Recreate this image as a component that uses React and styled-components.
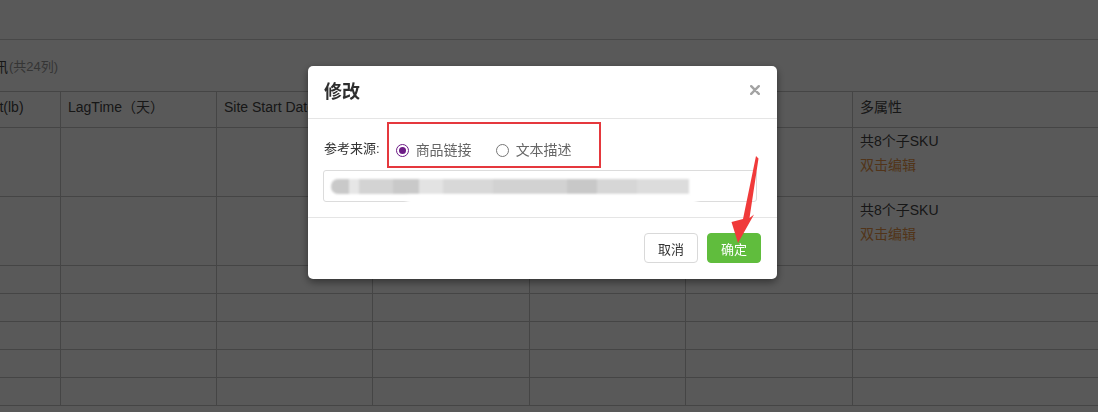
import React from "react";
import styled, { createGlobalStyle } from "styled-components";

const GlobalStyle = createGlobalStyle`
  html, body { margin: 0; padding: 0; width: 100%; height: 100%; overflow: hidden; background: #fff; }
  body { font-family: "Liberation Sans", "Noto Sans CJK SC", sans-serif; color: #444; }
  * { box-sizing: border-box; }
`;

const Page = styled.div`
  width: 1098px;
  height: 412px;
  overflow: hidden;
  background: #fff;
`;

const TopBar = styled.div`
  height: 40px;
  border-bottom: 1px solid #cfcfcf;
`;

const Caption = styled.div`
  height: 51px;
  display: flex;
  align-items: center;
  margin-left: -48px;
  font-size: 14px;
  color: #444;
  white-space: nowrap;
`;

const CaptionCount = styled.span`
  font-size: 13px;
  color: #999;
  margin-left: 1px;
`;

const Grid = styled.div`
  border-top: 1px solid #c6c6c6;
  margin-left: -47px;
  width: 1400px;
`;

const Row = styled.div`
  display: flex;
  height: ${(p) => p.$h}px;
  border-bottom: 1px solid #c6c6c6;
`;

const Cell = styled.div`
  flex: none;
  width: ${(p) => p.$w}px;
  border-right: 1px solid #c6c6c6;
  padding: ${(p) => (p.$head ? "5px 7px" : "1px 7px")};
  font-size: 14px;
  line-height: ${(p) => (p.$head ? 20 : 24)}px;
  color: #444;
  white-space: nowrap;
  overflow: hidden;
`;

const EditLink = styled.div`
  color: #e8964a;
`;

const Overlay = styled.div`
  position: fixed;
  inset: 0;
  background: rgba(0, 0, 0, 0.65);
`;

const Modal = styled.div`
  position: fixed;
  left: 308px;
  top: 66px;
  width: 469px;
  background: #fff;
  border-radius: 5px;
  box-shadow: 0 3px 9px rgba(0, 0, 0, 0.45);
  font-family: "Liberation Sans", "Noto Sans CJK SC", sans-serif;
`;

const ModalHeader = styled.div`
  height: 53px;
  display: flex;
  align-items: center;
  justify-content: space-between;
  padding: 0 17px 0 16px;
  border-bottom: 1px solid #e5e5e5;
`;

const Title = styled.h3`
  margin: 0;
  font-size: 18px;
  font-weight: bold;
  color: #2e2e2e;
  line-height: 24px;
`;

const CloseButton = styled.button`
  border: 0;
  background: none;
  padding: 0;
  width: 10px;
  height: 10px;
  display: flex;
  margin-top: -5px;
  cursor: pointer;
`;

const ModalBody = styled.div`
  padding: 14px 20px 15px 15px;
  position: relative;
`;

const FormRow = styled.div`
  height: 32px;
  display: flex;
  align-items: center;
  margin-bottom: 5px;
`;

const Label = styled.span`
  font-size: 13px;
  color: #333;
  margin: 0 16px 0 1px;
  line-height: 20px;
`;

const RadioOption = styled.label`
  display: flex;
  align-items: center;
  gap: 7px;
  font-size: 14px;
  color: #666;
  margin-right: 24px;
  line-height: 20px;
  padding-top: 2px;
`;

const RadioDot = styled.span`
  width: 13px;
  height: 13px;
  border-radius: 50%;
  border: 1px solid ${(p) => (p.$checked ? "#6d1b86" : "#777")};
  display: flex;
  align-items: center;
  justify-content: center;
  &::after {
    content: "";
    width: 7px;
    height: 7px;
    border-radius: 50%;
    background: ${(p) => (p.$checked ? "#6d1b86" : "transparent")};
  }
`;

const Highlight = styled.div`
  position: absolute;
  left: 79px;
  top: 3px;
  width: 214px;
  height: 46px;
  border: 2px solid #e5383d;
  pointer-events: none;
`;

const InputBox = styled.div`
  position: relative;
  height: 32px;
  border: 1px solid #dcdcdc;
  border-radius: 3px;
  padding: 0 7px;
  display: flex;
  align-items: center;
`;

const Redacted = styled.div`
  display: flex;
  height: 15px;
  filter: blur(1.2px);
  border-radius: 7px 0 0 7px;
  overflow: hidden;
`;

const Blot = styled.span`
  display: block;
  height: 100%;
  width: ${(p) => p.$w}px;
  background: ${(p) => p.$c};
`;

const Smear = styled.div`
  position: absolute;
  left: 83px;
  top: 25px;
  width: 290px;
  height: 11px;
  background: #fff;
  filter: blur(2px);
`;

const ModalFooter = styled.div`
  border-top: 1px solid #e5e5e5;
  padding: 15px 16px 16px;
  display: flex;
  justify-content: flex-end;
  gap: 9px;
`;

const Button = styled.button`
  width: 54px;
  height: 30px;
  border-radius: 4px;
  font-size: 13px;
  font-family: "Liberation Sans", "Noto Sans CJK SC", sans-serif;
  cursor: pointer;
  border: 1px solid ${(p) => (p.$primary ? "#60bd3d" : "#d9d9d9")};
  background: ${(p) => (p.$primary ? "#60bd3d" : "#fff")};
  color: ${(p) => (p.$primary ? "#fff" : "#333")};
  padding: 0;
`;

const Arrow = styled.svg`
  position: fixed;
  left: 725px;
  top: 150px;
  width: 40px;
  height: 100px;
  pointer-events: none;
`;

const widths = [108, 156, 156, 157, 156, 167, 500];
const heads = ["Weight(lb)", "LagTime（天）", "Site Start Date", "Site End Date", "状态", "备注", "多属性"];
const rowHeights = [69, 69, 28, 28, 28, 28, 28];

const blots = [
  [18, "#c9c9c9"],
  [10, "#e6e6e6"],
  [34, "#d3d3d3"],
  [26, "#c9c9c9"],
  [24, "#e3e3e3"],
  [50, "#d8d8d8"],
  [74, "#d2d2d2"],
  [30, "#c8c8c8"],
  [40, "#d6d6d6"],
  [52, "#dcdcdc"],
];

export default function App() {
  return (
    <>
      <GlobalStyle />
      <Page>
        <TopBar />
        <Caption>
          商品资讯<CaptionCount>(共24列)</CaptionCount>
        </Caption>
        <Grid>
          <Row $h={36}>
            {heads.map((h, i) => (
              <Cell key={i} $w={widths[i]} $head>
                {h}
              </Cell>
            ))}
          </Row>
          {rowHeights.map((rh, r) => (
            <Row key={r} $h={rh}>
              {widths.map((w, i) => (
                <Cell key={i} $w={w}>
                  {i === 6 && r < 2 ? (
                    <>
                      <div>共8个子SKU</div>
                      <EditLink>双击编辑</EditLink>
                    </>
                  ) : null}
                </Cell>
              ))}
            </Row>
          ))}
        </Grid>
      </Page>
      <Overlay />
      <Modal>
        <ModalHeader>
          <Title>修改</Title>
          <CloseButton aria-label="close">
            <svg width="10" height="10" viewBox="0 0 10 10">
              <path d="M1.2 1.2 L8.8 8.8 M8.8 1.2 L1.2 8.8" stroke="#a3a3a3" strokeWidth="2.4" strokeLinecap="round" />
            </svg>
          </CloseButton>
        </ModalHeader>
        <ModalBody>
          <FormRow>
            <Label>参考来源:</Label>
            <RadioOption>
              <RadioDot $checked />
              商品链接
            </RadioOption>
            <RadioOption>
              <RadioDot />
              文本描述
            </RadioOption>
          </FormRow>
          <Highlight />
          <InputBox>
            <Redacted>
              {blots.map(([w, c], i) => (
                <Blot key={i} $w={w} $c={c} />
              ))}
            </Redacted>
            <Smear />
          </InputBox>
        </ModalBody>
        <ModalFooter>
          <Button>取消</Button>
          <Button $primary>确定</Button>
        </ModalFooter>
      </Modal>
      <Arrow viewBox="0 0 40 100">
        <polygon points="31,6 33.5,8.5 24.5,68 29,64.5 13,93 6.5,72 18,69" fill="#f03a3a" />
      </Arrow>
    </>
  );
}
